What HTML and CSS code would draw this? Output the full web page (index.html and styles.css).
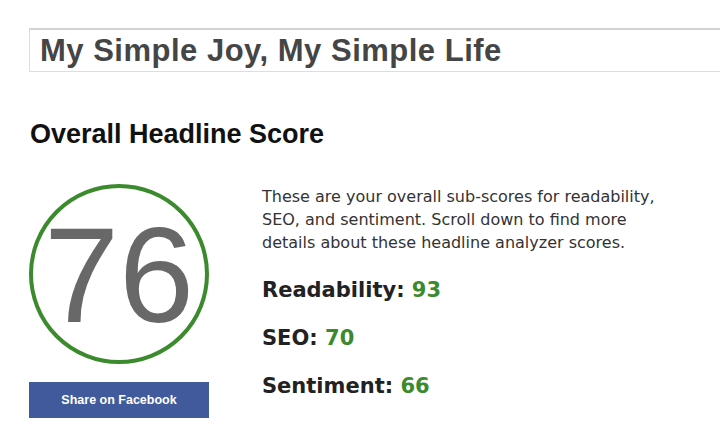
FILE: index.html
```html
<!DOCTYPE html>
<html>
<head>
<meta charset="utf-8">
<link rel="stylesheet" href="styles.css">
</head>
<body>
<div class="page">
  <div class="headline-input">My Simple Joy, My Simple Life</div>
  <h2 class="section-title">Overall Headline Score</h2>
  <div class="score-row">
    <div class="score-col">
      <div class="score-circle">76</div>
      <a class="fb-share">Share on Facebook</a>
    </div>
    <div class="details-col">
      <p class="intro">These are your overall sub-scores for readability, SEO, and sentiment. Scroll down to find more details about these headline analyzer scores.</p>
      <div class="sub-score">Readability: <span class="val">93</span></div>
      <div class="sub-score">SEO: <span class="val">70</span></div>
      <div class="sub-score">Sentiment: <span class="val">66</span></div>
    </div>
  </div>
</div>
</body>
</html>
```
FILE: styles.css
```css
html, body {
  margin: 0;
  padding: 0;
  background: #fff;
  overflow: hidden;
}
.page {
  width: 720px;
  height: 427px;
  padding: 28px 0 0 29px;
  box-sizing: border-box;
  overflow: hidden;
}
.headline-input {
  width: 720px;
  height: 41px;
  box-sizing: content-box;
  border: 1px solid #dedede;
  border-top: 2px solid #d2d2d2;
  padding: 0 0 0 10px;
  font-family: "Liberation Sans", Arial, sans-serif;
  font-weight: bold;
  font-size: 31px;
  line-height: 42px;
  color: #454545;
  letter-spacing: 0.5px;
}
.section-title {
  margin: 46px 0 0 1px;
  font-family: "Liberation Sans", Arial, sans-serif;
  font-weight: bold;
  font-size: 27px;
  line-height: 32px;
  color: #111;
}
.score-row {
  display: flex;
  gap: 53px;
  margin-top: 34px;
}
.score-col {
  width: 180px;
  display: flex;
  flex-direction: column;
  gap: 18px;
}
.score-circle {
  width: 180px;
  height: 180px;
  box-sizing: border-box;
  border: 4px solid #3c8a2e;
  border-radius: 50%;
  display: flex;
  align-items: center;
  justify-content: center;
  padding-top: 3px;
  font-family: "Liberation Sans", Arial, sans-serif;
  font-size: 135px;
  line-height: 1;
  color: #686868;
}
.fb-share {
  display: flex;
  align-items: center;
  justify-content: center;
  height: 36px;
  background: #415a9b;
  color: #fff;
  font-family: "Liberation Sans", Arial, sans-serif;
  font-weight: bold;
  font-size: 12.5px;
}
.details-col {
  padding-top: 1px;
  font-family: Verdana, "DejaVu Sans", sans-serif;
}
.intro {
  margin: 0;
  width: 420px;
  font-size: 16px;
  line-height: 23px;
  color: #333;
}
.sub-score {
  margin-top: 24px;
  font-size: 21px;
  font-weight: bold;
  line-height: 24px;
  color: #222;
}
.sub-score .val {
  color: #3b8a2e;
}
```
